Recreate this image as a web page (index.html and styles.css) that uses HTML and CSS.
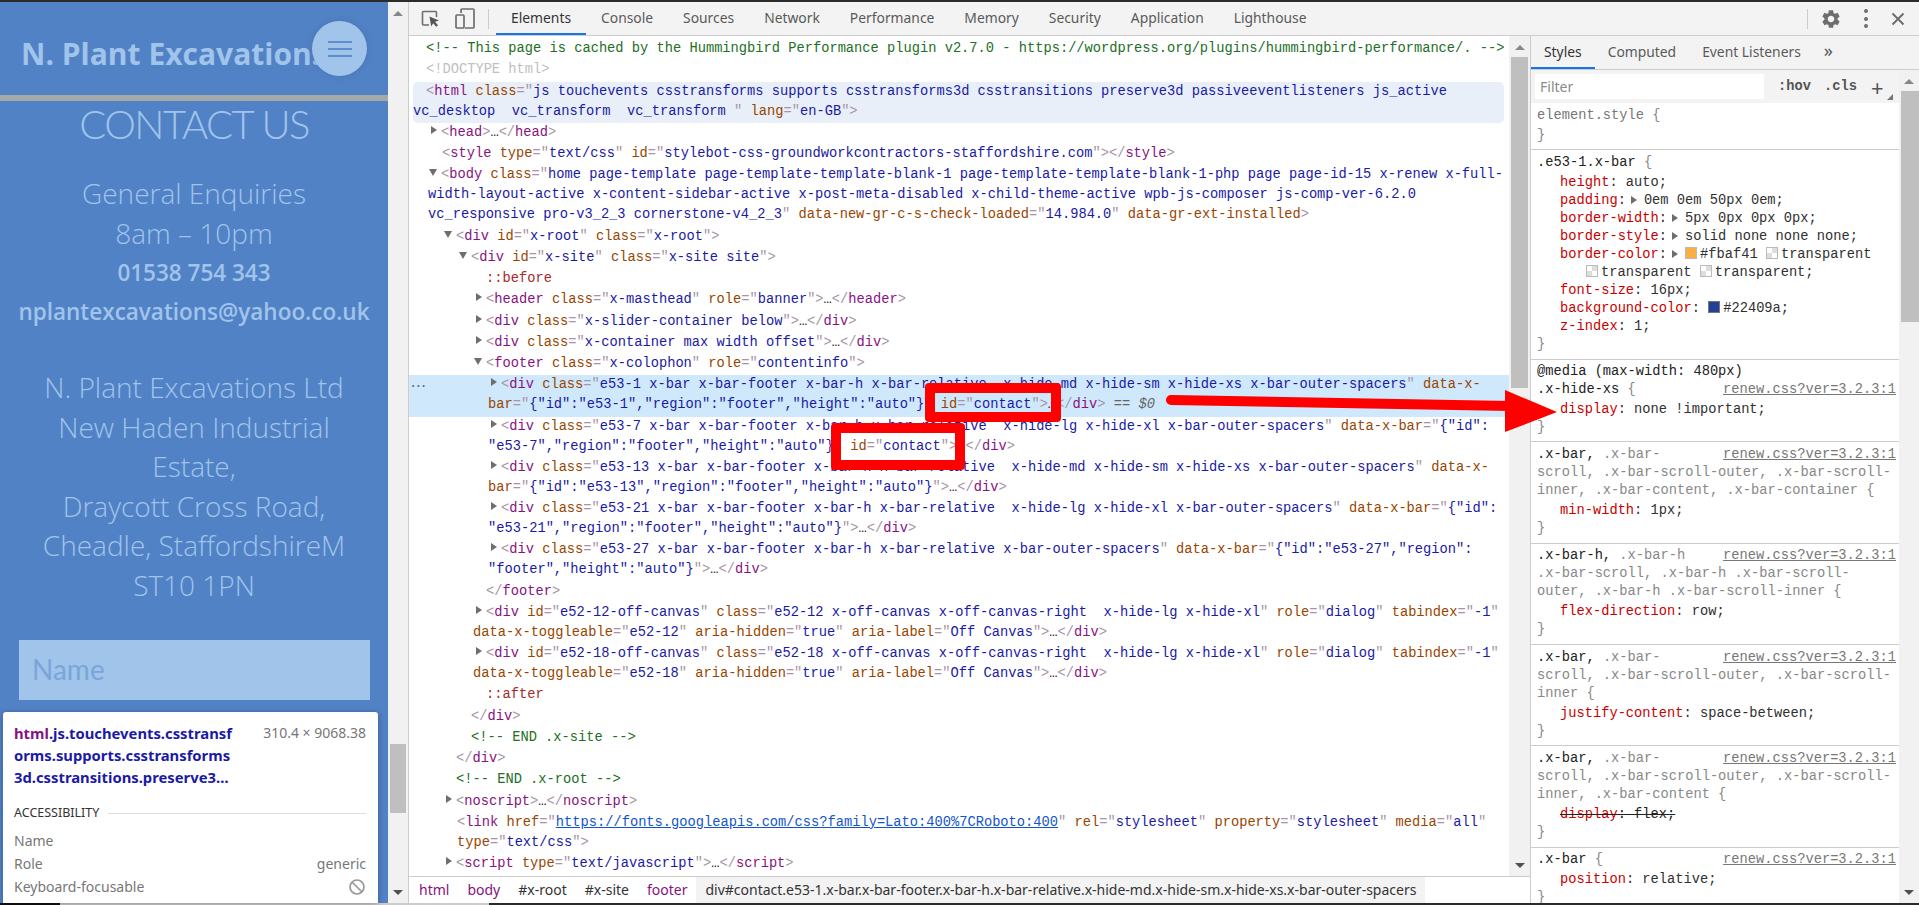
FILE: index.html
```html
<!DOCTYPE html>
<html lang="en">
<head>
    <meta charset="UTF-8">
    <title>DevTools - id contact</title>
    <link rel="stylesheet" href="styles.css">
</head>
<body>
    <div class="strip-top"></div>
    <div class="main">
        <!-- Mobile preview of the site -->
        <div class="page">
            <div class="masthead">
                <span class="brand">N. Plant Excavations</span>
                <div class="burger"><i></i><i></i><i></i></div>
            </div>
            <div class="page-title">CONTACT US</div>
            <div class="hours">General Enquiries<br>8am – 10pm</div>
            <div class="phone">01538 754 343</div>
            <div class="email">nplantexcavations@yahoo.co.uk</div>
            <div class="address">N. Plant Excavations Ltd<br>New Haden Industrial<br>Estate,<br>Draycott Cross Road,<br>Cheadle, StaffordshireM<br>ST10 1PN</div>
            <div class="name-input">Name</div>
        </div>
        <div class="page-scroll">
            <span class="sb-up"></span>
            <span class="page-thumb"></span>
            <span class="sb-down"></span>
        </div>

        <!-- Devtools -->
        <div class="devtools">
            <div class="toolbar">
                <svg class="ico-inspect" width="20" height="18" viewBox="0 0 20 18"><path d="M8 15H2.500a1 1 0 0 1-1-1V2.500a1 1 0 0 1 1-1h12a1 1 0 0 1 1 1V7" fill="none" stroke="#6e6e6e" stroke-width="1.600"/><path d="M8.500 6.500l9.500 4-4 1.300 3 3.500-1.800 1.500-3-3.600-2 3.300z" fill="#555"/></svg>
                <svg class="ico-device" width="20" height="21" viewBox="0 0 20 21"><path d="M6 5V2a1 1 0 0 1 1-1h11a1 1 0 0 1 1 1v17a1 1 0 0 1-1 1h-8" fill="none" stroke="#6e6e6e" stroke-width="1.700"/><rect x="1" y="7" width="8" height="13" rx="1" fill="none" stroke="#6e6e6e" stroke-width="1.700"/></svg>
                <span class="tool-sep"></span>
                <a class="tab active">Elements</a>
                <a class="tab">Console</a>
                <a class="tab">Sources</a>
                <a class="tab">Network</a>
                <a class="tab">Performance</a>
                <a class="tab">Memory</a>
                <a class="tab">Security</a>
                <a class="tab">Application</a>
                <a class="tab">Lighthouse</a>
                <div class="tool-right">
                    <span class="tool-sep"></span>
                    <svg width="22" height="22" viewBox="0 0 24 24"><path fill="#6e6e6e" d="M19.140 12.940c.04-.3.06-.61.06-.94 0-.32-.02-.64-.07-.94l2.030-1.580c.18-.14.23-.41.12-.61l-1.920-3.320c-.12-.22-.37-.29-.59-.22l-2.390.96c-.5-.38-1.030-.7-1.620-.94l-.36-2.540c-.04-.24-.24-.41-.48-.41h-3.840c-.24 0-.43.17-.47.41l-.36 2.540c-.59.24-1.130.57-1.620.94l-2.390-.96c-.22-.08-.47 0-.59.22L2.740 8.870c-.12.21-.08.47.12.61l2.030 1.580c-.05.3-.09.63-.09.94s.02.64.07.94l-2.030 1.580c-.18.14-.23.41-.12.61l1.920 3.320c.12.22.37.29.59.22l2.390-.96c.5.38 1.030.7 1.620.94l.36 2.540c.05.24.24.41.48.41h3.840c.24 0 .44-.17.47-.41l.36-2.540c.59-.24 1.130-.56 1.620-.94l2.390.96c.22.08.47 0 .59-.22l1.920-3.320c.12-.22.07-.47-.12-.61l-2.010-1.580zM12 15.600c-1.980 0-3.600-1.620-3.600-3.600s1.620-3.600 3.600-3.600 3.600 1.620 3.600 3.600-1.620 3.600-3.600 3.600z"/></svg>
                    <div class="kebab"><i></i><i></i><i></i></div>
                    <svg width="14" height="14" viewBox="0 0 14 14"><path d="M1.500 1.500l11 11M12.500 1.500l-11 11" stroke="#6e6e6e" stroke-width="2"/></svg>
                </div>
            </div>

            <div class="panels">
                <div class="dom-col">
                    <div class="dom-wrap">
                        <div class="dom">
                            <div class="row d0"><span class="c">&lt;!-- This page is cached by the Hummingbird Performance plugin v2.7.0 - https://wordpress.org/plugins/hummingbird-performance/. --&gt;</span></div>
                            <div class="row d0"><span class="dt">&lt;!DOCTYPE html&gt;</span></div>
                            <div class="row d0 hovered"><b>&lt;</b><span class="t">html</span> <span class="n">class</span><b>=</b><b>"</b><span class="v">js touchevents csstransforms supports csstransforms3d csstransitions preserve3d passiveeventlisteners js_active </span><br><span class="v">vc_desktop  vc_transform  vc_transform </span><b>"</b> <span class="n">lang</span><b>=</b><b>"</b><span class="v">en-GB</span><b>"</b><b>&gt;</b></div>
                            <div class="row d1"><i class="ar-r"></i><b>&lt;</b><span class="t">head</span><b>&gt;</b>…<b>&lt;/</b><span class="t">head</span><b>&gt;</b></div>
                            <div class="row d1 leaf"><b>&lt;</b><span class="t">style</span> <span class="n">type</span><b>="</b><span class="v">text/css</span><b>"</b> <span class="n">id</span><b>="</b><span class="v">stylebot-css-groundworkcontractors-staffordshire.com</span><b>"</b><b>&gt;&lt;/</b><span class="t">style</span><b>&gt;</b></div>
                            <div class="row d1"><i class="ar-d"></i><b>&lt;</b><span class="t">body</span> <span class="n">class</span><b>="</b><span class="v">home page-template page-template-template-blank-1 page-template-template-blank-1-php page page-id-15 x-renew x-full-</span><br><span class="v">width-layout-active x-content-sidebar-active x-post-meta-disabled x-child-theme-active wpb-js-composer js-comp-ver-6.2.0 </span><br><span class="v">vc_responsive pro-v3_2_3 cornerstone-v4_2_3</span><b>"</b> <span class="n">data-new-gr-c-s-check-loaded</span><b>="</b><span class="v">14.984.0</span><b>"</b> <span class="n">data-gr-ext-installed</span><b>&gt;</b></div>
                            <div class="row d2"><i class="ar-d"></i><b>&lt;</b><span class="t">div</span> <span class="n">id</span><b>="</b><span class="v">x-root</span><b>"</b> <span class="n">class</span><b>="</b><span class="v">x-root</span><b>"</b><b>&gt;</b></div>
                            <div class="row d3"><i class="ar-d"></i><b>&lt;</b><span class="t">div</span> <span class="n">id</span><b>="</b><span class="v">x-site</span><b>"</b> <span class="n">class</span><b>="</b><span class="v">x-site site</span><b>"</b><b>&gt;</b></div>
                            <div class="row d4"><span class="ps">::before</span></div>
                            <div class="row d4"><i class="ar-r"></i><b>&lt;</b><span class="t">header</span> <span class="n">class</span><b>="</b><span class="v">x-masthead</span><b>"</b> <span class="n">role</span><b>="</b><span class="v">banner</span><b>"</b><b>&gt;</b>…<b>&lt;/</b><span class="t">header</span><b>&gt;</b></div>
                            <div class="row d4"><i class="ar-r"></i><b>&lt;</b><span class="t">div</span> <span class="n">class</span><b>="</b><span class="v">x-slider-container below</span><b>"</b><b>&gt;</b>…<b>&lt;/</b><span class="t">div</span><b>&gt;</b></div>
                            <div class="row d4"><i class="ar-r"></i><b>&lt;</b><span class="t">div</span> <span class="n">class</span><b>="</b><span class="v">x-container max width offset</span><b>"</b><b>&gt;</b>…<b>&lt;/</b><span class="t">div</span><b>&gt;</b></div>
                            <div class="row d4"><i class="ar-d"></i><b>&lt;</b><span class="t">footer</span> <span class="n">class</span><b>="</b><span class="v">x-colophon</span><b>"</b> <span class="n">role</span><b>="</b><span class="v">contentinfo</span><b>"</b><b>&gt;</b></div>
                            <div class="row d5 selected"><span class="dots">•••</span><i class="ar-r"></i><b>&lt;</b><span class="t">div</span> <span class="n">class</span><b>="</b><span class="v">e53-1 x-bar x-bar-footer x-bar-h x-bar-relative  x-hide-md x-hide-sm x-hide-xs x-bar-outer-spacers</span><b>"</b> <span class="n">data-x-</span><br><span class="n">bar</span><b>="</b><span class="v">{"id":"e53-1","region":"footer","height":"auto"}</span><b>"</b> <span class="n">id</span><b>="</b><span class="v">contact</span><b>"</b><b>&gt;</b>…<b>&lt;/</b><span class="t">div</span><b>&gt;</b> <span class="eq">== <em>$0</em></span></div>
                            <div class="row d5"><i class="ar-r"></i><b>&lt;</b><span class="t">div</span> <span class="n">class</span><b>="</b><span class="v">e53-7 x-bar x-bar-footer x-bar-h x-bar-relative  x-hide-lg x-hide-xl x-bar-outer-spacers</span><b>"</b> <span class="n">data-x-bar</span><b>="</b><span class="v">{"id":</span><br><span class="v">"e53-7","region":"footer","height":"auto"}</span><b>"</b> <span class="n">id</span><b>="</b><span class="v">contact</span><b>"</b><b>&gt;</b>…<b>&lt;/</b><span class="t">div</span><b>&gt;</b></div>
                            <div class="row d5"><i class="ar-r"></i><b>&lt;</b><span class="t">div</span> <span class="n">class</span><b>="</b><span class="v">e53-13 x-bar x-bar-footer x-bar-h x-bar-relative  x-hide-md x-hide-sm x-hide-xs x-bar-outer-spacers</span><b>"</b> <span class="n">data-x-</span><br><span class="n">bar</span><b>="</b><span class="v">{"id":"e53-13","region":"footer","height":"auto"}</span><b>"</b><b>&gt;</b>…<b>&lt;/</b><span class="t">div</span><b>&gt;</b></div>
                            <div class="row d5"><i class="ar-r"></i><b>&lt;</b><span class="t">div</span> <span class="n">class</span><b>="</b><span class="v">e53-21 x-bar x-bar-footer x-bar-h x-bar-relative  x-hide-lg x-hide-xl x-bar-outer-spacers</span><b>"</b> <span class="n">data-x-bar</span><b>="</b><span class="v">{"id":</span><br><span class="v">"e53-21","region":"footer","height":"auto"}</span><b>"</b><b>&gt;</b>…<b>&lt;/</b><span class="t">div</span><b>&gt;</b></div>
                            <div class="row d5"><i class="ar-r"></i><b>&lt;</b><span class="t">div</span> <span class="n">class</span><b>="</b><span class="v">e53-27 x-bar x-bar-footer x-bar-h x-bar-relative x-bar-outer-spacers</span><b>"</b> <span class="n">data-x-bar</span><b>="</b><span class="v">{"id":"e53-27","region":</span><br><span class="v">"footer","height":"auto"}</span><b>"</b><b>&gt;</b>…<b>&lt;/</b><span class="t">div</span><b>&gt;</b></div>
                            <div class="row d4"><b>&lt;/</b><span class="t">footer</span><b>&gt;</b></div>
                            <div class="row d4"><i class="ar-r"></i><b>&lt;</b><span class="t">div</span> <span class="n">id</span><b>="</b><span class="v">e52-12-off-canvas</span><b>"</b> <span class="n">class</span><b>="</b><span class="v">e52-12 x-off-canvas x-off-canvas-right  x-hide-lg x-hide-xl</span><b>"</b> <span class="n">role</span><b>="</b><span class="v">dialog</span><b>"</b> <span class="n">tabindex</span><b>="</b><span class="v">-1</span><b>"</b><br><span class="n">data-x-toggleable</span><b>="</b><span class="v">e52-12</span><b>"</b> <span class="n">aria-hidden</span><b>="</b><span class="v">true</span><b>"</b> <span class="n">aria-label</span><b>="</b><span class="v">Off Canvas</span><b>"</b><b>&gt;</b>…<b>&lt;/</b><span class="t">div</span><b>&gt;</b></div>
                            <div class="row d4"><i class="ar-r"></i><b>&lt;</b><span class="t">div</span> <span class="n">id</span><b>="</b><span class="v">e52-18-off-canvas</span><b>"</b> <span class="n">class</span><b>="</b><span class="v">e52-18 x-off-canvas x-off-canvas-right  x-hide-lg x-hide-xl</span><b>"</b> <span class="n">role</span><b>="</b><span class="v">dialog</span><b>"</b> <span class="n">tabindex</span><b>="</b><span class="v">-1</span><b>"</b><br><span class="n">data-x-toggleable</span><b>="</b><span class="v">e52-18</span><b>"</b> <span class="n">aria-hidden</span><b>="</b><span class="v">true</span><b>"</b> <span class="n">aria-label</span><b>="</b><span class="v">Off Canvas</span><b>"</b><b>&gt;</b>…<b>&lt;/</b><span class="t">div</span><b>&gt;</b></div>
                            <div class="row d4"><span class="ps">::after</span></div>
                            <div class="row d3"><b>&lt;/</b><span class="t">div</span><b>&gt;</b></div>
                            <div class="row d3"><span class="c">&lt;!-- END .x-site --&gt;</span></div>
                            <div class="row d2"><b>&lt;/</b><span class="t">div</span><b>&gt;</b></div>
                            <div class="row d2"><span class="c">&lt;!-- END .x-root --&gt;</span></div>
                            <div class="row d2"><i class="ar-r"></i><b>&lt;</b><span class="t">noscript</span><b>&gt;</b>…<b>&lt;/</b><span class="t">noscript</span><b>&gt;</b></div>
                            <div class="row d2 leaf"><b>&lt;</b><span class="t">link</span> <span class="n">href</span><b>="</b><span class="lnk">https://fonts.googleapis.com/css?family=Lato:400%7CRoboto:400</span><b>"</b> <span class="n">rel</span><b>="</b><span class="v">stylesheet</span><b>"</b> <span class="n">property</span><b>="</b><span class="v">stylesheet</span><b>"</b> <span class="n">media</span><b>="</b><span class="v">all</span><b>"</b><br><span class="n">type</span><b>="</b><span class="v">text/css</span><b>"</b><b>&gt;</b></div>
                            <div class="row d2"><i class="ar-r"></i><b>&lt;</b><span class="t">script</span> <span class="n">type</span><b>="</b><span class="v">text/javascript</span><b>"</b><b>&gt;</b>…<b>&lt;/</b><span class="t">script</span><b>&gt;</b></div>
                        </div>
                        <div class="dom-scroll">
                            <span class="sb-up"></span>
                            <span class="dom-thumb"></span>
                            <span class="sb-down"></span>
                        </div>
                    </div>
                    <div class="crumbs">
                        <span class="crumb tag">html</span>
                        <span class="crumb tag">body</span>
                        <span class="crumb">#x-root</span>
                        <span class="crumb">#x-site</span>
                        <span class="crumb tag">footer</span>
                        <span class="crumb current">div#contact.e53-1.x-bar.x-bar-footer.x-bar-h.x-bar-relative.x-hide-md.x-hide-sm.x-hide-xs.x-bar-outer-spacers</span>
                    </div>
                </div>

                <!-- Styles sidebar -->
                <div class="side">
                    <div class="side-tabs">
                        <a class="stab active">Styles</a>
                        <a class="stab">Computed</a>
                        <a class="stab">Event Listeners</a>
                        <span class="more">»</span>
                    </div>
                    <div class="side-body">
                        <div class="styles">
                            <div class="filter-bar">
                                <div class="filter">Filter</div>
                                <span class="hov">:hov</span>
                                <span class="cls">.cls</span>
                                <span class="plus">+</span>
                                <span class="corner"></span>
                            </div>
                            <div class="rule">
                                <div class="sel grey">element.style <u>{</u></div>
                                <div class="close"><u>}</u></div>
                            </div>
                            <div class="rule">
                                <div class="sel">.e53-1.x-bar <u>{</u></div>
                                <div class="decl"><s>height</s>: auto;</div>
                                <div class="decl"><s>padding</s>:<i class="tri"></i>0em 0em 50px 0em;</div>
                                <div class="decl"><s>border-width</s>:<i class="tri"></i>5px 0px 0px 0px;</div>
                                <div class="decl"><s>border-style</s>:<i class="tri"></i>solid none none none;</div>
                                <div class="decl"><s>border-color</s>:<i class="tri"></i><i class="sw orange"></i>#fbaf41 <i class="sw check"></i>transparent</div>
                                <div class="decl cont"><i class="sw check"></i>transparent <i class="sw check"></i>transparent;</div>
                                <div class="decl"><s>font-size</s>: 16px;</div>
                                <div class="decl"><s>background-color</s>: <i class="sw navy"></i>#22409a;</div>
                                <div class="decl"><s>z-index</s>: 1;</div>
                                <div class="close"><u>}</u></div>
                            </div>
                            <div class="rule media">
                                <div class="sel">@media (max-width: 480px)</div>
                                <div class="sel"><a class="src">renew.css?ver=3.2.3:1</a>.x-hide-xs <u>{</u></div>
                                <div class="decl"><s>display</s>: none !important;</div>
                                <div class="close"><u>}</u></div>
                            </div>
                            <div class="rule">
                                <div class="sel"><a class="src">renew.css?ver=3.2.3:1</a>.x-bar, <u>.x-bar-<br>scroll, .x-bar-scroll-outer, .x-bar-scroll-<br>inner, .x-bar-content, .x-bar-container {</u></div>
                                <div class="decl"><s>min-width</s>: 1px;</div>
                                <div class="close"><u>}</u></div>
                            </div>
                            <div class="rule">
                                <div class="sel"><a class="src">renew.css?ver=3.2.3:1</a>.x-bar-h, <u>.x-bar-h<br>.x-bar-scroll, .x-bar-h .x-bar-scroll-<br>outer, .x-bar-h .x-bar-scroll-inner {</u></div>
                                <div class="decl"><s>flex-direction</s>: row;</div>
                                <div class="close"><u>}</u></div>
                            </div>
                            <div class="rule">
                                <div class="sel"><a class="src">renew.css?ver=3.2.3:1</a>.x-bar, <u>.x-bar-<br>scroll, .x-bar-scroll-outer, .x-bar-scroll-<br>inner {</u></div>
                                <div class="decl"><s>justify-content</s>: space-between;</div>
                                <div class="close"><u>}</u></div>
                            </div>
                            <div class="rule">
                                <div class="sel"><a class="src">renew.css?ver=3.2.3:1</a>.x-bar, <u>.x-bar-<br>scroll, .x-bar-scroll-outer, .x-bar-scroll-<br>inner, .x-bar-content {</u></div>
                                <div class="decl struck"><s>display</s>: flex;</div>
                                <div class="close"><u>}</u></div>
                            </div>
                            <div class="rule">
                                <div class="sel"><a class="src">renew.css?ver=3.2.3:1</a>.x-bar <u>{</u></div>
                                <div class="decl"><s>position</s>: relative;</div>
                                <div class="close"><u>}</u></div>
                            </div>
                        </div>
                        <div class="side-scroll">
                            <span class="sb-up"></span>
                            <span class="side-thumb"></span>
                            <span class="sb-down"></span>
                        </div>
                    </div>
                </div>
            </div>
        </div>
    </div>
    <div class="strip-bottom"><span></span><span></span><span></span></div>

    <!-- Inspect tooltip -->
    <div class="inspect-tip">
        <div class="tip-top">
            <div class="tip-sel"><span class="tip-tag">html</span>.js.touchevents.csstransf<br>orms.supports.csstransforms<br>3d.csstransitions.preserve3…</div>
            <div class="tip-size">310.4 × 9068.38</div>
        </div>
        <div class="tip-head"><span>ACCESSIBILITY</span><i></i></div>
        <div class="tip-row">Name</div>
        <div class="tip-row">Role<span>generic</span></div>
        <div class="tip-row">Keyboard-focusable
            <svg width="18" height="18" viewBox="0 0 18 18"><circle cx="9" cy="9" r="7" fill="none" stroke="#999" stroke-width="1.700"/><path d="M4 4l10 10" stroke="#999" stroke-width="1.700"/></svg>
        </div>
    </div>

    <!-- Red annotations drawn on top of the screenshot -->
    <div class="mark mark-one"></div>
    <div class="mark mark-two"></div>
    <svg class="mark-arrow" width="400" height="50" viewBox="0 0 400 50"><path d="M5 5L345 11V21L5 15a5 5 0 0 1 0-10z" fill="#fe0000"/><path d="M339 0L391 22 339 42z" fill="#fe0000"/></svg>
</body>
</html>
```

FILE: styles.css
```css
/* Basic layout */
html, body {
    margin: 0;
    padding: 0;
    height: 905px;
    overflow: hidden;
}
body {
    font-family: "Noto Sans", sans-serif;
    font-size: 14px;
    display: flex;
    flex-direction: column;
    position: relative;
    background: #fff;
}
.strip-top {
    height: 2px;
    background: #2b2b2b;
}
.main {
    flex: 1;
    display: flex;
    min-height: 0;
}
.strip-bottom {
    height: 2px;
    display: flex;
}
.strip-bottom span:nth-child(1) { width: 60px; background: #111; }
.strip-bottom span:nth-child(2) { width: 429px; background: #ccc; }
.strip-bottom span:nth-child(3) { flex: 1; background: #2b2b2b; }

/* Mobile page */
.page {
    width: 388px;
    background: #5282c6;
    color: #a0c4ea;
    text-align: center;
    overflow: hidden;
    font-family: "Open Sans", sans-serif;
}
.masthead {
    height: 93px;
    border-bottom: 6px solid #a3a9a6;
    position: relative;
    text-align: left;
}
.brand {
    display: block;
    padding: 32px 0 0 21px;
    font-size: 30px;
    line-height: 40px;
    font-weight: 700;
    white-space: nowrap;
}
.burger {
    position: absolute;
    left: 312px;
    top: 19px;
    width: 55px;
    height: 55px;
    border-radius: 50%;
    background: #a0c4ea;
    box-shadow: 0 0 6px rgba(40, 70, 130, 0.25);
    display: flex;
    flex-direction: column;
    align-items: center;
    justify-content: center;
    gap: 5px;
}
.burger i {
    width: 24px;
    height: 2px;
    background: #5f8dcc;
}
.page-title {
    font-family: Lato, sans-serif;
    font-weight: 300;
    font-size: 40px;
    line-height: 48px;
    letter-spacing: -1.500px;
    margin-top: -1px;
}
.hours {
    font-weight: 300;
    font-size: 28px;
    line-height: 40px;
    margin-top: 25px;
}
.phone, .email {
    font-weight: 600;
    font-size: 22.500px;
    line-height: 39px;
}
.address {
    font-weight: 300;
    font-size: 28px;
    line-height: 39.500px;
    margin-top: 37px;
}
.name-input {
    margin: 35px 0 0 19px;
    width: 351px;
    height: 60px;
    box-sizing: border-box;
    padding-left: 13px;
    background: #a0c4ea;
    color: #7ba5d9;
    font-family: Lato, sans-serif;
    font-size: 28px;
    line-height: 58px;
    text-align: left;
}

/* Scrollbars */
.page-scroll, .dom-scroll, .side-scroll {
    background: #f1f1f1;
    position: relative;
    flex: none;
}
.page-scroll {
    width: 21px;
    border-right: 1px solid #ccc;
    box-sizing: border-box;
}
.dom-scroll {
    width: 21px;
}
.side-scroll {
    width: 20px;
}
.page-thumb, .dom-thumb, .side-thumb {
    position: absolute;
    background: #bfbfbf;
}
.page-thumb { left: 2px; right: 2px; top: 742px; height: 69px; }
.dom-thumb { left: 2px; right: 2px; top: 21px; height: 331px; }
.side-thumb { left: 2px; right: 0; top: 21px; height: 231px; }
.sb-up, .sb-down {
    position: absolute;
    left: 50%;
    margin-left: -5px;
    width: 0;
    height: 0;
    border-left: 5px solid transparent;
    border-right: 5px solid transparent;
}
.sb-up {
    top: 9px;
    border-bottom: 5px solid #888;
}
.sb-down {
    bottom: 8px;
    border-top: 5px solid #505050;
}

/* Devtools toolbar */
.devtools {
    flex: 1;
    min-width: 0;
    display: flex;
    flex-direction: column;
}
.toolbar {
    height: 34px;
    flex: none;
    box-sizing: border-box;
    background: #f3f3f3;
    border-bottom: 1px solid #ccc;
    display: flex;
    align-items: center;
    padding-left: 12px;
}
.ico-inspect { margin-right: 14px; }
.ico-device { margin-right: 13px; }
.tool-sep {
    width: 1px;
    height: 20px;
    background: #ccc;
    margin-right: 7px;
}
.tab {
    height: 33px;
    box-sizing: border-box;
    padding: 0 15px;
    line-height: 32px;
    color: #5a5a5a;
    font-size: 13.850px;
}
.tab.active {
    color: #333;
    border-bottom: 2px solid #1a73e8;
}
.tool-right {
    margin-left: auto;
    display: flex;
    align-items: center;
    width: 112px;
    gap: 12px;
}
.tool-right .tool-sep { margin-right: 0; }
.kebab {
    display: flex;
    flex-direction: column;
    gap: 3.500px;
    margin: 0 11px 0 10px;
}
.kebab i {
    width: 4px;
    height: 4px;
    border-radius: 50%;
    background: #6e6e6e;
}

.panels {
    flex: 1;
    display: flex;
    min-height: 0;
}

/* Elements tree */
.dom-col {
    flex: 1;
    min-width: 0;
    display: flex;
    flex-direction: column;
}
.dom-wrap {
    flex: 1;
    min-height: 0;
    display: flex;
}
.dom {
    flex: 1;
    min-width: 0;
    padding-top: 3px;
    overflow: hidden;
    font-family: "Liberation Mono", monospace;
    font-size: 13.720px;
    line-height: 20px;
    color: #222;
}
.row {
    white-space: pre;
    padding-bottom: 1.250px;
    text-indent: 13px;
    position: relative;
}
.row b { font-weight: 400; color: #a894a6; }
.row em { font-style: italic; }
.d0 { padding-left: 4px; }
.d1 { padding-left: 19px; }
.d2 { padding-left: 34px; }
.d3 { padding-left: 49px; }
.d4 { padding-left: 64px; }
.d5 { padding-left: 79px; }
.leaf { padding-left: 48px; text-indent: 0; }
.d1.leaf { padding-left: 33px; }
.t { color: #881280; }
.n { color: #994500; }
.v { color: #1a1aa6; }
.c { color: #236e25; }
.dt { color: #c0c0c0; }
.ps { color: #a52a2a; }
.lnk { color: #1155cc; text-decoration: underline; }
.eq { color: #666; }
.hovered {
    background: #e8eff9;
    border-radius: 5px;
    margin: 0 5px 0 4px;
    padding-left: 0;
}
.selected {
    background: #cfe8fc;
}
.dots {
    position: absolute;
    left: 2px;
    top: 1px;
    font-size: 7px;
    text-indent: 0;
    letter-spacing: 1px;
    color: #666;
}
.ar-r, .ar-d {
    display: inline-block;
    width: 0;
    height: 0;
    margin-right: 4px;
    vertical-align: 2px;
}
.ar-r {
    margin-left: -10px;
    border-top: 4px solid transparent;
    border-bottom: 4px solid transparent;
    border-left: 6px solid #6e6e6e;
}
.ar-d {
    margin-left: -12px;
    border-left: 4px solid transparent;
    border-right: 4px solid transparent;
    border-top: 7px solid #6e6e6e;
}

/* Breadcrumbs */
.crumbs {
    height: 27px;
    flex: none;
    box-sizing: border-box;
    border-top: 1px solid #ccc;
    padding-left: 1px;
    display: flex;
    font-size: 14px;
    line-height: 26px;
    color: #333;
    white-space: nowrap;
    overflow: hidden;
}
.crumb {
    padding: 0 9px;
}
.crumb.tag { color: #881280; }
.crumb.current { background: #f3f3f3; }

/* Styles sidebar */
.side {
    width: 389px;
    flex: none;
    border-left: 1px solid #ccc;
    display: flex;
    flex-direction: column;
    box-sizing: border-box;
}
.side-tabs {
    height: 34px;
    flex: none;
    box-sizing: border-box;
    background: #f3f3f3;
    border-bottom: 1px solid #ccc;
    display: flex;
}
.stab {
    height: 33px;
    box-sizing: border-box;
    padding: 0 13px;
    line-height: 32px;
    color: #5a5a5a;
    font-size: 13.850px;
}
.stab.active {
    color: #333;
    border-bottom: 2px solid #1a73e8;
}
.more {
    margin-left: 10px;
    font-size: 18px;
    line-height: 28px;
    color: #555;
}
.side-body {
    flex: 1;
    min-height: 0;
    display: flex;
}
.styles {
    flex: 1;
    min-width: 0;
    overflow: hidden;
    font-family: "Liberation Mono", monospace;
    font-size: 13.720px;
    line-height: 18px;
    color: #303030;
}
.filter-bar {
    height: 33px;
    background: #f3f3f3;
    display: flex;
    align-items: center;
    padding-left: 4px;
    position: relative;
    white-space: nowrap;
}
.filter {
    width: 229px;
    height: 25px;
    background: #fff;
    padding-left: 5px;
    box-sizing: border-box;
    font-family: "Noto Sans", sans-serif;
    font-size: 14px;
    line-height: 25px;
    color: #8a8a8a;
}
.hov, .cls {
    font-weight: 700;
    color: #555;
}
.hov { margin-left: 14px; }
.cls { margin-left: 13px; }
.plus {
    margin-left: 14px;
    font-family: "Noto Sans", sans-serif;
    font-size: 22px;
    color: #555;
}
.corner {
    position: absolute;
    right: 6px;
    bottom: 3px;
    width: 0;
    height: 0;
    border-left: 6px solid transparent;
    border-bottom: 6px solid #777;
}
.rule {
    padding: 3.500px 0 4.900px 6px;
    border-bottom: 1px solid #ccc;
}
.media { padding-bottom: 4px; }
.sel, .decl, .close {
    white-space: pre;
}
.sel + .decl, .sel + .close {
    margin-top: 2px;
}
.sel { color: #222; }
.sel.grey { color: #777; }
.sel u, .close u {
    text-decoration: none;
    color: #888;
}
.src {
    float: right;
    margin-right: 3px;
    color: #777;
    text-decoration: underline;
}
.decl {
    padding-left: 23px;
}
.decl s {
    text-decoration: none;
    color: #c80000;
}
.decl.cont {
    padding-left: 49px;
}
.decl.struck {
    color: #222;
    text-decoration: line-through;
}
.decl.struck s {
    text-decoration: line-through;
    text-decoration-color: #222;
}
.tri {
    display: inline-block;
    width: 0;
    height: 0;
    margin: 0 7px 0 5px;
    border-top: 4px solid transparent;
    border-bottom: 4px solid transparent;
    border-left: 6px solid #6e6e6e;
}
.sw {
    display: inline-block;
    width: 12px;
    height: 12px;
    margin-right: 3px;
    vertical-align: -1px;
    box-sizing: border-box;
    border: 1px solid #bbb;
}
.orange { background: #fbaf41; }
.navy { background: #22409a; border-color: #777; }
.check {
    background: conic-gradient(#ddd 25%, #fff 0 50%, #ddd 0 75%, #fff 0) 0 0 / 10px 10px;
}

/* Inspect tooltip */
.inspect-tip {
    position: absolute;
    left: 3px;
    top: 712px;
    width: 375px;
    height: 191px;
    box-sizing: border-box;
    padding: 10px 12px 0 11px;
    background: #fff;
    border-radius: 3px 3px 0 0;
    box-shadow: 0 1px 6px rgba(0, 0, 0, 0.3);
    font-size: 14px;
    color: #777;
}
.tip-top {
    display: flex;
    justify-content: space-between;
    line-height: 22px;
}
.tip-sel {
    font-weight: 700;
    font-size: 14.800px;
    color: #1a1aa6;
    white-space: nowrap;
}
.tip-tag { color: #881280; }
.tip-head {
    display: flex;
    align-items: center;
    margin-top: 16px;
    line-height: 18px;
    font-size: 12.500px;
    color: #333;
}
.tip-head i {
    flex: 1;
    height: 1px;
    margin-left: 9px;
    background: #ddd;
}
.tip-row {
    display: flex;
    justify-content: space-between;
    align-items: center;
    line-height: 23px;
}
.tip-row:nth-child(3) { margin-top: 7px; }

/* Red annotations */
.mark {
    position: absolute;
    box-sizing: border-box;
    border: 10px solid #fe0000;
    border-radius: 4px;
}
.mark-one { left: 925px; top: 383px; width: 136px; height: 39px; }
.mark-two { left: 831px; top: 423px; width: 134px; height: 47px; }
.mark-arrow {
    position: absolute;
    left: 1166px;
    top: 390px;
}
```
